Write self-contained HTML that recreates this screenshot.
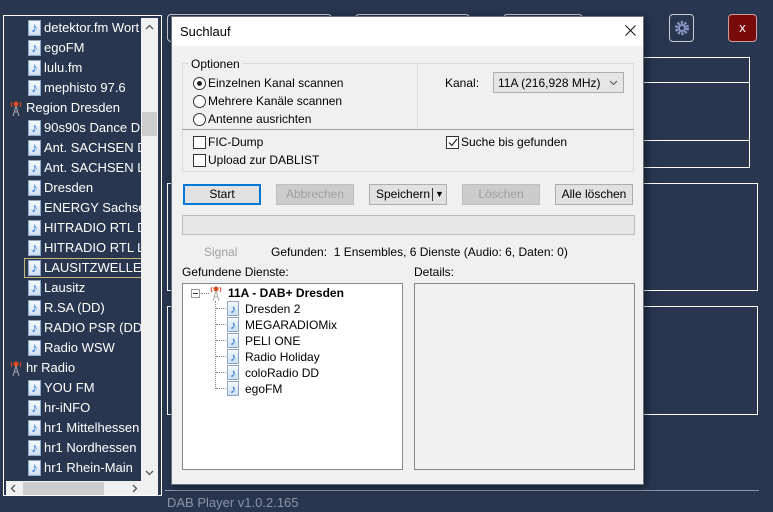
<!DOCTYPE html>
<html><head><meta charset="utf-8"><style>
*{margin:0;padding:0;box-sizing:border-box}
body{width:773px;height:512px;background:#283650;position:relative;overflow:hidden;font-family:"Liberation Sans","DejaVu Sans",sans-serif;font-size:12px;color:#000}
.a{position:absolute}
.li{position:absolute;color:#fff;font-size:13px;white-space:nowrap;height:20px;line-height:20px}
.ic{position:absolute;width:13px;height:16px;background:linear-gradient(#f4f8fc,#cfe0f2);border:1px solid #8ea8c8;color:#1e6fd0;font-size:13px;line-height:14px;text-align:center;font-weight:bold}
.ant{position:absolute;width:12px;height:16px}
.btn{position:absolute;top:184px;height:21px;border:1px solid #adadad;background:#e1e1e1;text-align:center;line-height:19px}
.dis{color:#a0a0a0;background:#cccccc;border-color:#bfbfbf}
.rad{position:absolute;width:13px;height:13px;border:1px solid #333;border-radius:50%;background:#fff}
.chk{position:absolute;width:13px;height:13px;border:1px solid #333;background:#fff}
.t{position:absolute;white-space:nowrap}
.tr{position:absolute;white-space:nowrap;line-height:16px}
</style></head><body>

<div class="a" style="left:167px;top:14px;width:165px;height:28px;border:1px solid #c8ccd4;border-radius:4px"></div>
<div class="a" style="left:355px;top:14px;width:115px;height:28px;border:1px solid #c8ccd4;border-radius:4px"></div>
<div class="a" style="left:503px;top:14px;width:80px;height:28px;border:1px solid #c8ccd4;border-radius:4px"></div>
<div class="a" style="left:669px;top:14px;width:25px;height:28px;border:1px solid #c8ccd4;border-radius:4px"></div>
<svg class="a" style="left:674px;top:20px" width="16" height="16" viewBox="0 0 16 16"><circle cx="8" cy="8" r="5.5" fill="none" stroke="#8a96c4" stroke-width="3" stroke-dasharray="2.2 1.3"/><circle cx="8" cy="8" r="4" fill="#8a96c4"/><circle cx="8" cy="8" r="2" fill="#283650"/></svg>
<div class="a" style="left:728px;top:14px;width:29px;height:28px;background:#7a0a0a;border:1px solid #c8a0a0;border-radius:4px;color:#fff;text-align:center;line-height:26px;font-size:13px">x</div>

<div class="a" style="left:640px;top:57px;width:110px;height:111px;border:1px solid #fff;border-left:none"></div>
<div class="a" style="left:640px;top:82px;width:110px;height:1px;background:#fff"></div>
<div class="a" style="left:640px;top:140px;width:110px;height:1px;background:#fff"></div>
<div class="a" style="left:167px;top:183px;width:591px;height:108px;border:1px solid #fff"></div>
<div class="a" style="left:167px;top:306px;width:591px;height:109px;border:1px solid #fff"></div>
<div class="a" style="left:165px;top:490px;width:594px;height:1px;background:#8b93a6"></div>
<div class="t" style="left:167px;top:495px;color:#8b93a6;font-size:13px">DAB Player v1.0.2.165</div>

<div class="a" style="left:3px;top:15px;width:159px;height:481px;border:1px solid #fff"></div>

<span class="ic" style="left:28px;top:20px">♪</span><div class="li" style="left:44px;top:18px">detektor.fm Wort</div>
<span class="ic" style="left:28px;top:40px">♪</span><div class="li" style="left:44px;top:38px">egoFM</div>
<span class="ic" style="left:28px;top:60px">♪</span><div class="li" style="left:44px;top:58px">lulu.fm</div>
<span class="ic" style="left:28px;top:80px">♪</span><div class="li" style="left:44px;top:78px">mephisto 97.6</div>
<svg class="ant" style="left:10px;top:100px" viewBox="0 0 12 16"><circle cx="6" cy="4" r="2.5" fill="#e04a20"/><path d="M2 2a5 5 0 0 0 0 5M10 2a5 5 0 0 1 0 5" stroke="#e04a20" fill="none"/><path d="M6 6L3 16M6 6l3 10M4 12h4" stroke="#aaa" fill="none"/></svg><div class="li" style="left:26px;top:98px">Region Dresden</div>
<span class="ic" style="left:28px;top:120px">♪</span><div class="li" style="left:44px;top:118px">90s90s Dance DD</div>
<span class="ic" style="left:28px;top:140px">♪</span><div class="li" style="left:44px;top:138px">Ant. SACHSEN DD</div>
<span class="ic" style="left:28px;top:160px">♪</span><div class="li" style="left:44px;top:158px">Ant. SACHSEN La</div>
<span class="ic" style="left:28px;top:180px">♪</span><div class="li" style="left:44px;top:178px">Dresden</div>
<span class="ic" style="left:28px;top:200px">♪</span><div class="li" style="left:44px;top:198px">ENERGY Sachsen</div>
<span class="ic" style="left:28px;top:220px">♪</span><div class="li" style="left:44px;top:218px">HITRADIO RTL  D</div>
<span class="ic" style="left:28px;top:240px">♪</span><div class="li" style="left:44px;top:238px">HITRADIO RTL La</div>
<div class="a" style="left:24px;top:258px;width:118px;height:20px;border:1px solid #c8b878"></div>
<span class="ic" style="left:28px;top:260px">♪</span><div class="li" style="left:44px;top:258px">LAUSITZWELLE</div>
<span class="ic" style="left:28px;top:280px">♪</span><div class="li" style="left:44px;top:278px">Lausitz</div>
<span class="ic" style="left:28px;top:300px">♪</span><div class="li" style="left:44px;top:298px">R.SA (DD)</div>
<span class="ic" style="left:28px;top:320px">♪</span><div class="li" style="left:44px;top:318px">RADIO PSR (DD)</div>
<span class="ic" style="left:28px;top:340px">♪</span><div class="li" style="left:44px;top:338px">Radio WSW</div>
<svg class="ant" style="left:10px;top:360px" viewBox="0 0 12 16"><circle cx="6" cy="4" r="2.5" fill="#e04a20"/><path d="M2 2a5 5 0 0 0 0 5M10 2a5 5 0 0 1 0 5" stroke="#e04a20" fill="none"/><path d="M6 6L3 16M6 6l3 10M4 12h4" stroke="#aaa" fill="none"/></svg><div class="li" style="left:26px;top:358px">hr Radio</div>
<span class="ic" style="left:28px;top:380px">♪</span><div class="li" style="left:44px;top:378px">YOU FM</div>
<span class="ic" style="left:28px;top:400px">♪</span><div class="li" style="left:44px;top:398px">hr-iNFO</div>
<span class="ic" style="left:28px;top:420px">♪</span><div class="li" style="left:44px;top:418px">hr1 Mittelhessen</div>
<span class="ic" style="left:28px;top:440px">♪</span><div class="li" style="left:44px;top:438px">hr1 Nordhessen</div>
<span class="ic" style="left:28px;top:460px">♪</span><div class="li" style="left:44px;top:458px">hr1 Rhein-Main</div>
<div class="a" style="left:141px;top:18px;width:17px;height:463px;background:#f0f0f0"></div>
<div class="a" style="left:142px;top:112px;width:15px;height:24px;background:#cdcdcd"></div>
<svg class="a" style="left:145px;top:24px" width="9" height="6"><path d="M1 5L4.5 1.5L8 5" stroke="#555" fill="none" stroke-width="1.3"/></svg>
<svg class="a" style="left:145px;top:470px" width="9" height="6"><path d="M1 1L4.5 4.5L8 1" stroke="#555" fill="none" stroke-width="1.3"/></svg>
<div class="a" style="left:6px;top:481px;width:152px;height:14px;background:#f0f0f0"></div>
<div class="a" style="left:23px;top:482px;width:81px;height:13px;background:#cdcdcd"></div>
<svg class="a" style="left:10px;top:484px" width="6" height="9"><path d="M5 1L1.5 4.5L5 8" stroke="#555" fill="none" stroke-width="1.3"/></svg>
<svg class="a" style="left:132px;top:484px" width="6" height="9"><path d="M1 1L4.5 4.5L1 8" stroke="#555" fill="none" stroke-width="1.3"/></svg>

<div class="a" style="left:171px;top:16px;width:473px;height:469px;background:#f0f0f0;border:1px solid #6d7080;box-shadow:2px 2px 8px rgba(0,0,0,.5)"></div>
<div class="a" style="left:172px;top:17px;width:471px;height:29px;background:#fff"></div>
<div class="t" style="left:180px;top:24px;font-size:13px">Suchlauf</div>
<svg class="a" style="left:625px;top:25px" width="11" height="11"><path d="M0.5 0.5L10.5 10.5M10.5 0.5L0.5 10.5" stroke="#111" stroke-width="1"/></svg>

<div class="a" style="left:182px;top:63px;width:452px;height:109px;border:1px solid #dcdcdc"></div>
<div class="a" style="left:182px;top:129px;width:452px;height:1px;background:#a0a0a0"></div>
<div class="a" style="left:417px;top:64px;width:1px;height:65px;background:#dcdcdc"></div>
<div class="t" style="left:189px;top:57px;background:#f0f0f0;padding:0 2px">Optionen</div>
<div class="rad" style="left:193px;top:77px"></div><div class="a" style="left:197px;top:81px;width:5px;height:5px;border-radius:50%;background:#222"></div>
<div class="t" style="left:208px;top:76px">Einzelnen Kanal scannen</div>
<div class="rad" style="left:193px;top:95px"></div><div class="t" style="left:208px;top:94px">Mehrere Kanäle scannen</div>
<div class="rad" style="left:193px;top:113px"></div><div class="t" style="left:208px;top:112px">Antenne ausrichten</div>
<div class="t" style="left:445px;top:76px">Kanal:</div>
<div class="a" style="left:493px;top:72px;width:131px;height:21px;background:#e5e5e5;border:1px solid #adadad"></div>
<div class="t" style="left:498px;top:76px">11A (216,928 MHz)</div>
<svg class="a" style="left:609px;top:80px" width="9" height="6"><path d="M1 1L4.5 4.5L8 1" stroke="#555" fill="none"/></svg>
<div class="chk" style="left:193px;top:136px"></div><div class="t" style="left:208px;top:135px">FIC-Dump</div>
<div class="chk" style="left:193px;top:154px"></div><div class="t" style="left:208px;top:153px">Upload zur DABLIST</div>
<div class="chk" style="left:446px;top:136px"></div><svg class="a" style="left:448px;top:138px" width="10" height="9"><path d="M1 4.5L3.8 7.5L9 1" stroke="#222" fill="none" stroke-width="1.2"/></svg><div class="t" style="left:461px;top:135px">Suche bis gefunden</div>

<div class="btn" style="left:183px;width:78px;border:2px solid #0078d7;line-height:17px">Start</div>
<div class="btn dis" style="left:276px;width:78px">Abbrechen</div>
<div class="btn" style="left:369px;width:78px;text-align:left;padding-left:6px">Speichern<span style="position:absolute;left:62px;top:3px;width:1px;height:13px;background:#333"></span><span style="position:absolute;left:65px;top:0;font-size:9px">▼</span></div>
<div class="btn dis" style="left:462px;width:78px">Löschen</div>
<div class="btn" style="left:555px;width:78px">Alle löschen</div>

<div class="a" style="left:182px;top:215px;width:453px;height:20px;background:#e6e6e6;border:1px solid #bcbcbc"></div>
<div class="t" style="left:204px;top:245px;color:#a0a0a0">Signal</div>
<div class="t" style="left:271px;top:245px">Gefunden:&nbsp; 1 Ensembles, 6 Dienste (Audio: 6, Daten: 0)</div>
<div class="t" style="left:182px;top:265px">Gefundene Dienste:</div>
<div class="t" style="left:414px;top:265px">Details:</div>
<div class="a" style="left:182px;top:283px;width:221px;height:187px;background:#fff;border:1px solid #828790"></div>
<div class="a" style="left:414px;top:283px;width:221px;height:187px;background:#f0f0f0;border:1px solid #828790"></div>

<div class="a" style="left:191px;top:289px;width:9px;height:9px;border:1px solid #999;background:#fff"></div>
<div class="a" style="left:193px;top:293px;width:5px;height:1px;background:#333"></div>
<div class="a" style="left:201px;top:293px;width:8px;border-top:1px dotted #888"></div>
<svg class="ant" style="left:210px;top:285px" viewBox="0 0 12 16"><circle cx="6" cy="4" r="2.5" fill="#e04a20"/><path d="M2 2a5 5 0 0 0 0 5M10 2a5 5 0 0 1 0 5" stroke="#e04a20" fill="none"/><path d="M6 6L3 16M6 6l3 10M4 12h4" stroke="#aaa" fill="none"/></svg>
<div class="tr" style="left:228px;top:285px;font-weight:bold;font-size:12px">11A - DAB+ Dresden</div>
<div class="a" style="left:215px;top:301px;height:88px;border-left:1px dotted #888"></div>
<div class="a" style="left:216px;top:308px;width:10px;border-top:1px dotted #888"></div><span class="ic" style="left:227px;top:301px;width:12px;height:15px;font-size:12px">♪</span><div class="tr" style="left:245px;top:301px">Dresden 2</div>
<div class="a" style="left:216px;top:324px;width:10px;border-top:1px dotted #888"></div><span class="ic" style="left:227px;top:317px;width:12px;height:15px;font-size:12px">♪</span><div class="tr" style="left:245px;top:317px">MEGARADIOMix</div>
<div class="a" style="left:216px;top:340px;width:10px;border-top:1px dotted #888"></div><span class="ic" style="left:227px;top:333px;width:12px;height:15px;font-size:12px">♪</span><div class="tr" style="left:245px;top:333px">PELI ONE</div>
<div class="a" style="left:216px;top:356px;width:10px;border-top:1px dotted #888"></div><span class="ic" style="left:227px;top:349px;width:12px;height:15px;font-size:12px">♪</span><div class="tr" style="left:245px;top:349px">Radio Holiday</div>
<div class="a" style="left:216px;top:372px;width:10px;border-top:1px dotted #888"></div><span class="ic" style="left:227px;top:365px;width:12px;height:15px;font-size:12px">♪</span><div class="tr" style="left:245px;top:365px">coloRadio DD</div>
<div class="a" style="left:216px;top:388px;width:10px;border-top:1px dotted #888"></div><span class="ic" style="left:227px;top:381px;width:12px;height:15px;font-size:12px">♪</span><div class="tr" style="left:245px;top:381px">egoFM</div>
</body></html>
